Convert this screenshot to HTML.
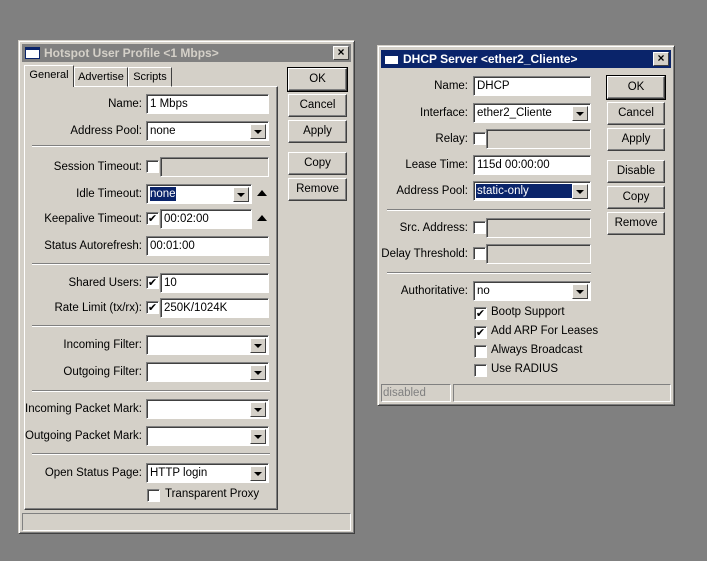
<!DOCTYPE html>
<html><head><meta charset="utf-8"><style>
*{box-sizing:border-box;margin:0;padding:0}
body{width:707px;height:561px;background:#808080;position:relative;overflow:hidden;font-family:"Liberation Sans",Arial,sans-serif;font-size:11.5px;color:#000}
div,span{position:absolute}
.win{background:#d4d0c8;border:1px solid;border-color:#d4d0c8 #404040 #404040 #d4d0c8;box-shadow:inset 1px 1px #fff,inset -1px -1px #808080}
.tb{height:18px;color:#d4d0c8;font-weight:bold;font-size:12px;line-height:18px;padding-left:22px}
.tb .ic{left:3px;top:3px;width:15px;height:12px;background:#fff;border:1px solid #0a246a;border-top:3px solid #0a246a}
.x{width:16px;height:14px;top:2px;background:#d4d0c8;border:1px solid;border-color:#fff #404040 #404040 #fff;font-size:12px;line-height:11px;text-align:center;color:#000;font-weight:bold}
.l{text-align:right;white-space:nowrap;line-height:20px;height:20px}
.f{height:20px;background:#fff;border:1px solid;border-color:#808080 #fff #fff #808080;box-shadow:inset 1px 1px #404040;padding-left:3px;line-height:18px;white-space:nowrap}
.f.dis{background:#d4d0c8}
.dd{right:2px;top:2px;width:16px;height:15px;background:#d4d0c8;border:1px solid;border-color:#fff #404040 #404040 #fff}
.dd:after{content:"";position:absolute;left:3px;top:5px;border-left:4px solid transparent;border-right:4px solid transparent;border-top:4px solid #000}
.sel{background:#0a246a;color:#fff;position:static;padding:1px 0}
.cb{width:13px;height:13px;background:#fff;border:1px solid;border-color:#808080 #fff #fff #808080;box-shadow:inset 1px 1px #404040;font-size:11px;line-height:11px;text-align:center;font-family:"DejaVu Sans",sans-serif}
.btn{height:23px;background:#d4d0c8;border:1px solid;border-color:#fff #404040 #404040 #fff;box-shadow:inset -1px -1px #808080;text-align:center;line-height:21px}
.btn.def{outline:1px solid #000}
.sep{height:2px;border-top:1px solid #808080;border-bottom:1px solid #fff}
.up{width:0;height:0;border-left:5px solid transparent;border-right:5px solid transparent;border-bottom:6px solid #000}
.tab{height:20px;border:1px solid;border-color:#fff #404040 transparent #fff;line-height:18px;text-align:center;font-size:11px}
</style></head><body>

<div class="win" style="left:18px;top:40px;width:337px;height:494px">
  <div class="tb" style="left:3px;top:3px;width:329px;background:#808080"><span class="ic"></span>Hotspot User Profile &lt;1 Mbps&gt;<span class="x" style="right:2px">×</span></div>
</div>
<div style="left:24px;top:86px;width:254px;height:424px;border:1px solid;border-color:#fff #404040 #404040 #fff;box-shadow:inset -1px -1px #808080"></div>
<div class="tab" style="left:24px;top:65px;width:50px;height:22px;background:#d4d0c8;border-bottom:none">General</div>
<div class="tab" style="left:74px;top:67px;width:54px">Advertise</div>
<div class="tab" style="left:128px;top:67px;width:44px">Scripts</div>

<div class="btn def" style="left:288px;top:68px;width:59px">OK</div>
<div class="btn" style="left:288px;top:94px;width:59px">Cancel</div>
<div class="btn" style="left:288px;top:120px;width:59px">Apply</div>
<div class="btn" style="left:288px;top:152px;width:59px">Copy</div>
<div class="btn" style="left:288px;top:178px;width:59px">Remove</div>

<div class="l" style="left:24px;width:118px;top:94px">Name:</div><div class="f" style="left:146px;top:94px;width:123px">1 Mbps</div>
<div class="l" style="left:24px;width:118px;top:121px">Address Pool:</div><div class="f" style="left:146px;top:121px;width:123px">none<span class="dd"></span></div>
<div class="sep" style="left:32px;top:145px;width:238px"></div>
<div class="l" style="left:24px;width:118px;top:157px">Session Timeout:</div><div class="cb" style="left:146px;top:160px"></div><div class="f dis" style="left:160px;top:157px;width:109px"></div>
<div class="l" style="left:24px;width:118px;top:184px">Idle Timeout:</div><div class="f" style="left:146px;top:184px;width:106px"><span class="sel">none</span><span class="dd"></span></div><div class="up" style="left:257px;top:190px"></div>
<div class="l" style="left:24px;width:118px;top:209px">Keepalive Timeout:</div><div class="cb" style="left:146px;top:212px">✔</div><div class="f" style="left:160px;top:209px;width:92px">00:02:00</div><div class="up" style="left:257px;top:215px"></div>
<div class="l" style="left:24px;width:118px;top:236px">Status Autorefresh:</div><div class="f" style="left:146px;top:236px;width:123px">00:01:00</div>
<div class="sep" style="left:32px;top:263px;width:238px"></div>
<div class="l" style="left:24px;width:118px;top:273px">Shared Users:</div><div class="cb" style="left:146px;top:276px">✔</div><div class="f" style="left:160px;top:273px;width:109px">10</div>
<div class="l" style="left:24px;width:118px;top:298px">Rate Limit (tx/rx):</div><div class="cb" style="left:146px;top:301px">✔</div><div class="f" style="left:160px;top:298px;width:109px">250K/1024K</div>
<div class="sep" style="left:32px;top:325px;width:238px"></div>
<div class="l" style="left:24px;width:118px;top:335px">Incoming Filter:</div><div class="f" style="left:146px;top:335px;width:123px"><span class="dd"></span></div>
<div class="l" style="left:24px;width:118px;top:362px">Outgoing Filter:</div><div class="f" style="left:146px;top:362px;width:123px"><span class="dd"></span></div>
<div class="sep" style="left:32px;top:390px;width:238px"></div>
<div class="l" style="left:24px;width:118px;top:399px">Incoming Packet Mark:</div><div class="f" style="left:146px;top:399px;width:123px"><span class="dd"></span></div>
<div class="l" style="left:24px;width:118px;top:426px">Outgoing Packet Mark:</div><div class="f" style="left:146px;top:426px;width:123px"><span class="dd"></span></div>
<div class="sep" style="left:32px;top:453px;width:238px"></div>
<div class="l" style="left:24px;width:118px;top:463px">Open Status Page:</div><div class="f" style="left:146px;top:463px;width:123px">HTTP login<span class="dd"></span></div>
<div class="cb" style="left:147px;top:489px"></div><div style="left:165px;top:488px">Transparent Proxy</div>
<div style="left:22px;top:513px;width:329px;height:18px;border:1px solid;border-color:#808080 #fff #fff #808080"></div>

<div class="win" style="left:377px;top:45px;width:298px;height:361px">
  <div class="tb" style="left:3px;top:4px;width:290px;background:#0a246a;color:#fff"><span class="ic"></span>DHCP Server &lt;ether2_Cliente&gt;<span class="x" style="right:2px">×</span></div>
</div>
<div class="btn def" style="left:607px;top:76px;width:58px">OK</div>
<div class="btn" style="left:607px;top:102px;width:58px">Cancel</div>
<div class="btn" style="left:607px;top:128px;width:58px">Apply</div>
<div class="btn" style="left:607px;top:160px;width:58px">Disable</div>
<div class="btn" style="left:607px;top:186px;width:58px">Copy</div>
<div class="btn" style="left:607px;top:212px;width:58px">Remove</div>

<div class="l" style="left:380px;width:88px;top:76px">Name:</div><div class="f" style="left:473px;top:76px;width:118px">DHCP</div>
<div class="l" style="left:380px;width:88px;top:103px">Interface:</div><div class="f" style="left:473px;top:103px;width:118px">ether2_Cliente<span class="dd"></span></div>
<div class="l" style="left:380px;width:88px;top:129px">Relay:</div><div class="cb" style="left:473px;top:132px"></div><div class="f dis" style="left:486px;top:129px;width:105px"></div>
<div class="l" style="left:380px;width:88px;top:155px">Lease Time:</div><div class="f" style="left:473px;top:155px;width:118px">115d 00:00:00</div>
<div class="l" style="left:380px;width:88px;top:181px">Address Pool:</div><div class="f" style="left:473px;top:181px;width:118px"><span style="left:2px;top:2px;width:96px;height:14px;background:#0a246a;color:#fff;padding-left:1px;line-height:14px">static-only</span><span class="dd"></span></div>
<div class="sep" style="left:387px;top:209px;width:204px"></div>
<div class="l" style="left:380px;width:88px;top:218px">Src. Address:</div><div class="cb" style="left:473px;top:221px"></div><div class="f dis" style="left:486px;top:218px;width:105px"></div>
<div class="l" style="left:380px;width:88px;top:244px">Delay Threshold:</div><div class="cb" style="left:473px;top:247px"></div><div class="f dis" style="left:486px;top:244px;width:105px"></div>
<div class="sep" style="left:387px;top:272px;width:204px"></div>
<div class="l" style="left:380px;width:88px;top:281px">Authoritative:</div><div class="f" style="left:473px;top:281px;width:118px">no<span class="dd"></span></div>
<div class="cb" style="left:474px;top:307px">✔</div><div style="left:491px;top:306px">Bootp Support</div>
<div class="cb" style="left:474px;top:326px">✔</div><div style="left:491px;top:325px">Add ARP For Leases</div>
<div class="cb" style="left:474px;top:345px"></div><div style="left:491px;top:344px">Always Broadcast</div>
<div class="cb" style="left:474px;top:364px"></div><div style="left:491px;top:363px">Use RADIUS</div>
<div style="left:381px;top:384px;width:70px;height:18px;border:1px solid;border-color:#808080 #fff #fff #808080;color:#808080;line-height:16px;padding-left:1px">disabled</div>
<div style="left:453px;top:384px;width:218px;height:18px;border:1px solid;border-color:#808080 #fff #fff #808080"></div>
</body></html>
